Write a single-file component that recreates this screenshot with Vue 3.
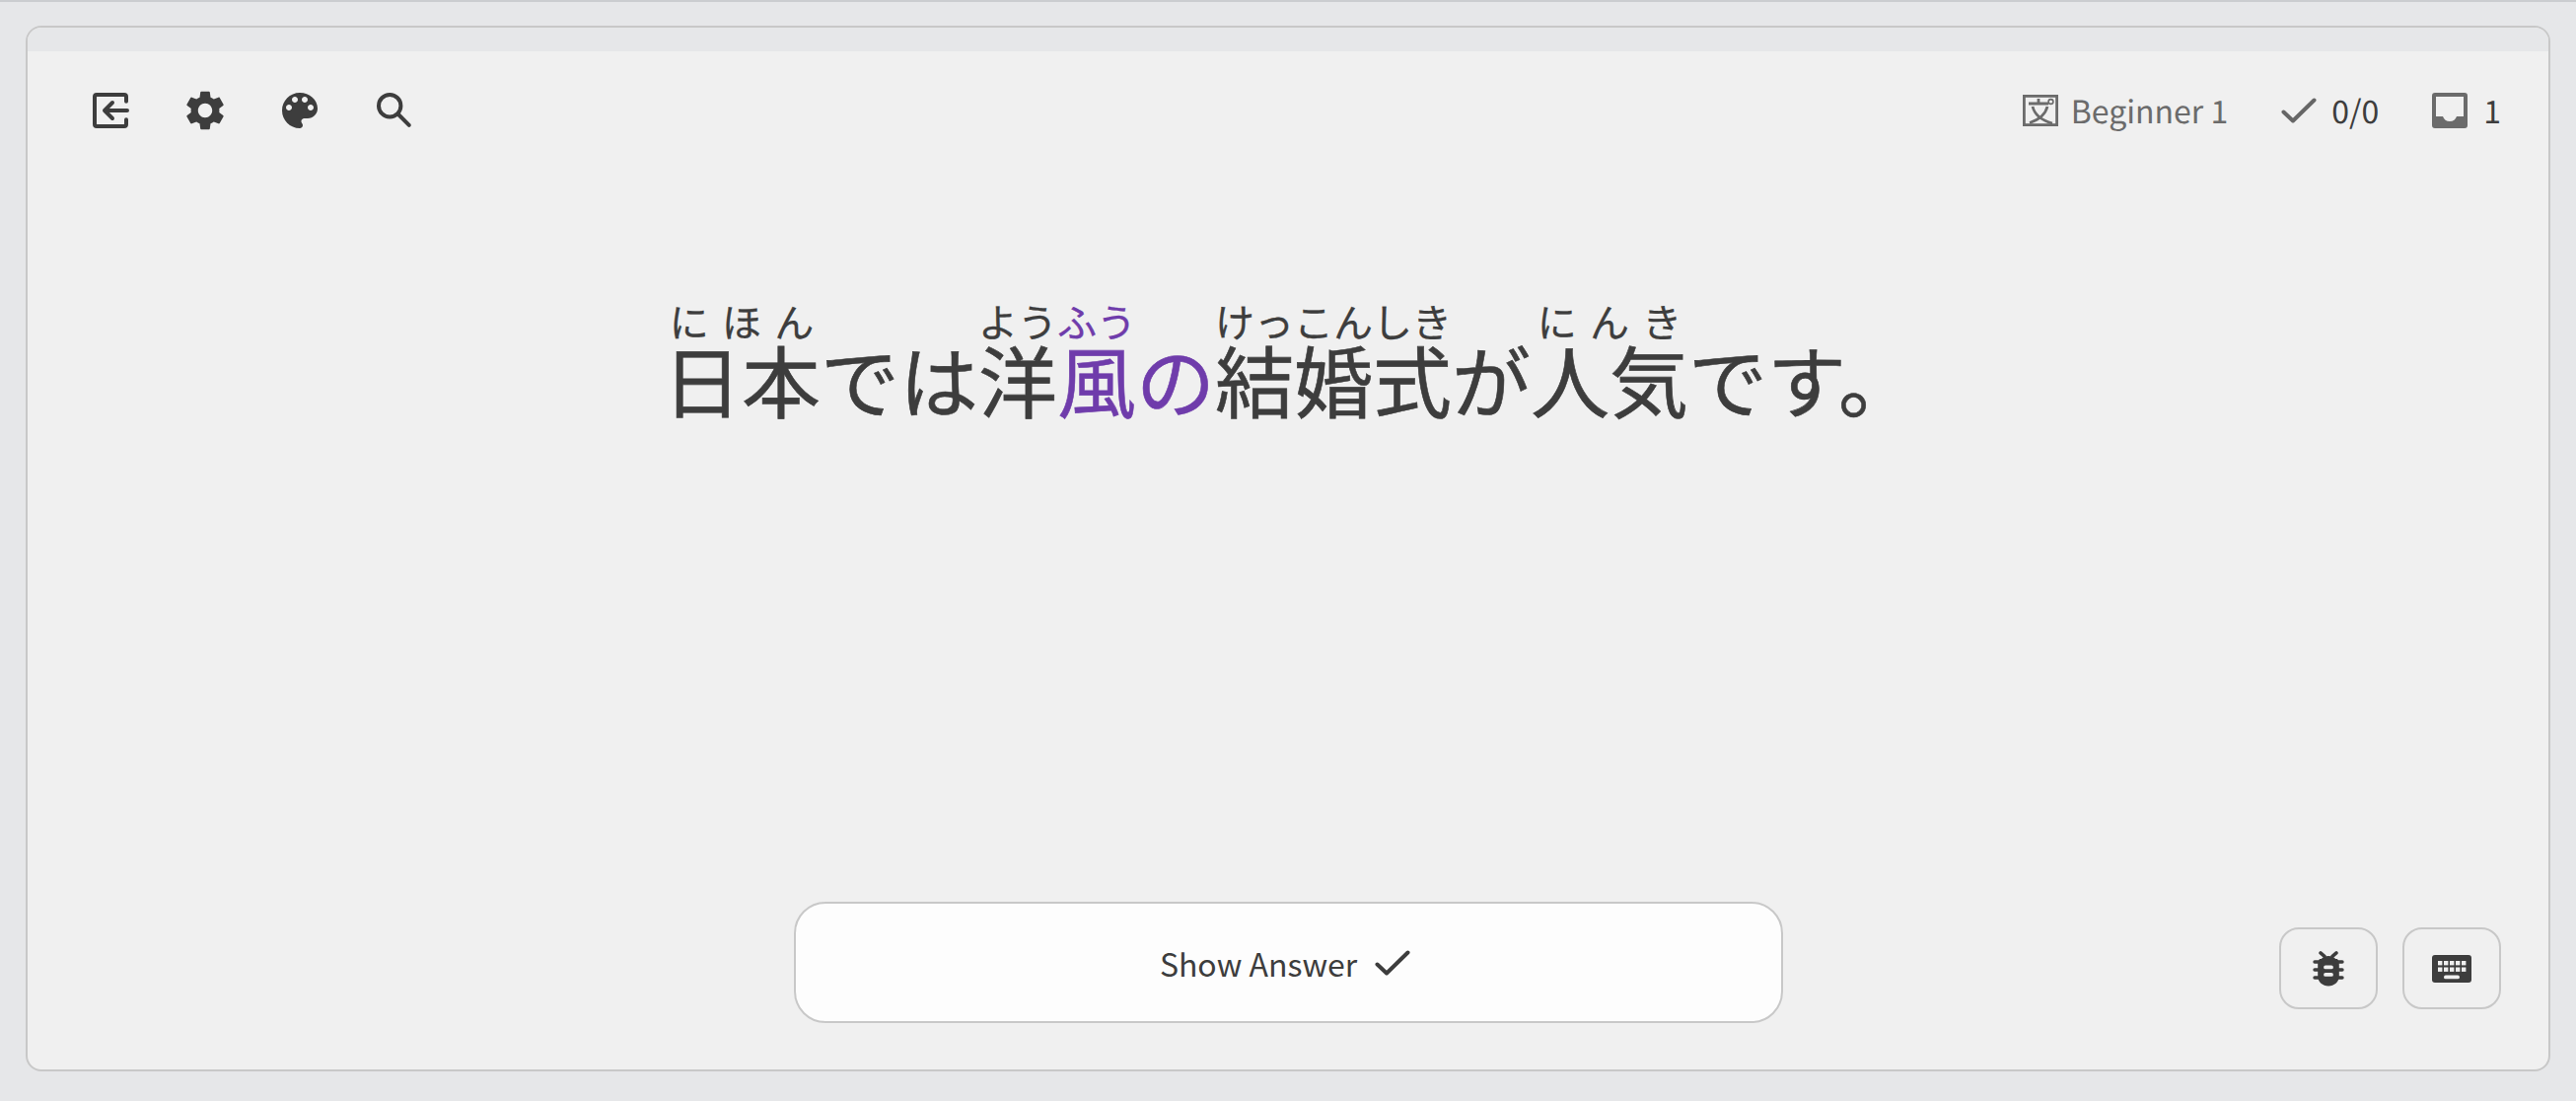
<script setup>
const leftIcons = ['exit', 'settings', 'palette', 'search']
const settingsPath = 'M19.14,12.94c0.04-0.3,0.06-0.61,0.06-0.94c0-0.32-0.02-0.64-0.07-0.94l2.03-1.58c0.18-0.14,0.23-0.41,0.12-0.61l-1.92-3.32c-0.12-0.22-0.37-0.29-0.59-0.22l-2.39,0.96c-0.5-0.38-1.03-0.7-1.62-0.94L14.4,2.81c-0.04-0.24-0.24-0.41-0.48-0.41h-3.84c-0.24,0-0.43,0.17-0.47,0.41L9.25,5.35C8.66,5.59,8.12,5.92,7.63,6.29L5.24,5.33c-0.22-0.08-0.47,0-0.59,0.22L2.74,8.87C2.62,9.08,2.66,9.34,2.86,9.48l2.03,1.58C4.84,11.36,4.8,11.69,4.8,12s0.02,0.64,0.07,0.94l-2.03,1.58c-0.18,0.14-0.23,0.41-0.12,0.61l1.92,3.32c0.12,0.22,0.37,0.29,0.59,0.22l2.39-0.96c0.5,0.38,1.03,0.7,1.62,0.94l0.36,2.54c0.05,0.24,0.24,0.41,0.48,0.41h3.84c0.24,0,0.44-0.17,0.47-0.41l0.36-2.54c0.59-0.24,1.13-0.56,1.62-0.94l2.39,0.96c0.22,0.08,0.47,0,0.59-0.22l1.92-3.32c0.12-0.22,0.07-0.47-0.12-0.61L19.14,12.94z M12,15.6c-1.98,0-3.6-1.62-3.6-3.6s1.62-3.6,3.6-3.6s3.6,1.62,3.6,3.6S13.98,15.6,12,15.6z'
const palettePath = 'M12 3c-4.97 0-9 4.03-9 9s4.03 9 9 9c.83 0 1.5-.67 1.5-1.5 0-.39-.15-.74-.39-1.01-.23-.26-.38-.61-.38-.99 0-.83.67-1.5 1.5-1.5H16c2.76 0 5-2.24 5-5 0-4.42-4.03-8-9-8zm-5.5 9c-.83 0-1.5-.67-1.5-1.5S5.67 9 6.5 9 8 9.67 8 10.5 7.33 12 6.5 12zm3-4C8.67 8 8 7.33 8 6.5S8.67 5 9.5 5s1.5.67 1.5 1.5S10.33 8 9.5 8zm5 0c-.83 0-1.5-.67-1.5-1.5S13.67 5 14.5 5s1.5.67 1.5 1.5S15.33 8 14.5 8zm3 4c-.83 0-1.5-.67-1.5-1.5S16.67 9 17.5 9s1.5.67 1.5 1.5-.67 1.5-1.5 1.5z'
const keys = [
  [6, 6], [12, 6], [18, 6], [24, 6], [30, 6],
  [6, 12.500], [12, 12.500], [18, 12.500], [24, 12.500], [30, 12.500],
]
</script>

<template>
  <div class="page">
    <main class="card">
      <div class="band"></div>
      <header class="topbar">
        <nav class="tools">
          <button v-for="icon in leftIcons" :key="icon" class="tool">
            <svg v-if="icon === 'exit'" viewBox="0 0 24 24" fill="none" stroke="currentColor" stroke-width="2" stroke-linecap="round" stroke-linejoin="round">
              <path d="M20 7.400V5a1 1 0 0 0-1-1H5a1 1 0 0 0-1 1v14a1 1 0 0 0 1 1h14a1 1 0 0 0 1-1v-2.400" />
              <path d="M20.500 12H9M13 8l-4 4 4 4" />
            </svg>
            <svg v-else-if="icon === 'settings'" viewBox="0 0 24 24" fill="currentColor"><path :d="settingsPath" /></svg>
            <svg v-else-if="icon === 'palette'" viewBox="0 0 24 24" fill="currentColor"><path :d="palettePath" /></svg>
            <svg v-else viewBox="0 0 24 24" fill="none" stroke="currentColor" stroke-width="2" stroke-linecap="round">
              <circle cx="9.600" cy="9.600" r="5.600" />
              <path d="M14 14l5.400 5.400" />
            </svg>
          </button>
        </nav>
        <div class="stats">
          <div class="stat stat--level">
            <svg class="level-icon" viewBox="0 0 36 32" fill="none" stroke="currentColor" stroke-width="2.800">
              <rect x="1.400" y="1.400" width="33.200" height="29.200" />
              <path d="M6 9h20M16 4v5M25 12c-2 8-9 13.500-18 16.500M10 12c2 8 9 14 20 17" />
              <circle cx="28.500" cy="7" r="2.400" stroke-width="1.600" />
            </svg>
            <span>Beginner 1</span>
          </div>
          <div class="stat stat--done">
            <svg class="check-icon" viewBox="0 0 36 26" fill="none" stroke="currentColor" stroke-width="4" stroke-linecap="round" stroke-linejoin="round">
              <path d="M2.500 14.500l9.500 9L33.500 2.500" />
            </svg>
            <span>0/0</span>
          </div>
          <div class="stat stat--inbox">
            <svg class="inbox-icon" viewBox="0 0 36 36">
              <path fill="currentColor" fill-rule="evenodd" d="M3 0h30a3 3 0 0 1 3 3v30a3 3 0 0 1-3 3H3a3 3 0 0 1-3-3V3a3 3 0 0 1 3-3zM4 4v20h7c1 3 3.500 5 7 5s6-2 7-5h7V4z" />
            </svg>
            <span>1</span>
          </div>
        </div>
      </header>

      <section class="question">
        <p class="sentence" lang="ja">
          <ruby>日本<rt>にほん</rt></ruby>では<ruby>洋<rt>よう</rt></ruby><span class="target"><ruby>風<rt>ふう</rt></ruby>の</span><ruby>結婚式<rt>けっこんしき</rt></ruby>が<ruby>人気<rt>にんき</rt></ruby>です。
        </p>
      </section>

      <footer class="actions">
        <div></div>
        <button class="answer">
          <span>Show Answer</span>
          <svg class="answer-check" viewBox="0 0 36 26" fill="none" stroke="currentColor" stroke-width="4" stroke-linecap="round" stroke-linejoin="round">
            <path d="M2.500 14.500l9.500 9L33.500 2.500" />
          </svg>
        </button>
        <div class="small-buttons">
          <button class="small">
            <svg class="bug" viewBox="0 0 32 36" fill="currentColor">
              <path fill-rule="evenodd" d="M16 5c3 0 5.500 1 7.300 3H8.700C10.500 6 13 5 16 5zM7 8h18c1.500 2 1.800 4 1.800 6v12c0 5-5 9.500-10.800 9.500S5.200 31 5.200 26V14c0-2 .3-4 1.800-6zm6 6.500a1.900 1.900 0 0 0 0 3.800h6a1.900 1.900 0 0 0 0-3.800zm0 7.500a1.900 1.900 0 0 0 0 3.800h6a1.900 1.900 0 0 0 0-3.800z" />
              <path fill="none" stroke="currentColor" stroke-width="3.400" stroke-linecap="round" d="M8 1.900l4 3.500M24 1.900l-4 3.500M2 11h5M25 11h5M2 19h5M25 19h5M2 27h5M25 27h5" />
            </svg>
          </button>
          <button class="small">
            <svg class="keyboard" viewBox="0 0 40 28">
              <rect width="40" height="28" rx="3" fill="currentColor" />
              <rect v-for="(key, i) in keys" :key="i" :x="key[0]" :y="key[1]" width="4.400" height="4.400" fill="#f0f0f0" />
              <rect x="12" y="20.500" width="16" height="3.800" rx="1.900" fill="#f0f0f0" />
            </svg>
          </button>
        </div>
      </footer>
    </main>
  </div>
</template>

<style scoped>
.page {
  box-sizing: border-box;
  height: 1116px;
  padding: 24px 26px 30px;
  border-top: 2px solid #cbcdd0;
  background: #e6e7e9;
  font-family: 'Noto Sans CJK JP', 'Noto Sans', sans-serif;
  color: #3d3d3d;
  text-rendering: geometricPrecision;
}

.card {
  box-sizing: border-box;
  height: 100%;
  display: flex;
  flex-direction: column;
  border: 2px solid #c8c8c8;
  border-radius: 16px;
  background: #f0f0f0;
  overflow: hidden;
}

.band {
  flex: none;
  height: 24px;
  background: #e6e7e9;
}

.topbar {
  flex: none;
  display: flex;
  align-items: center;
  justify-content: space-between;
  padding: 36px 48px 0 60px;
}

.tools {
  display: flex;
  gap: 48px;
}

.tool {
  width: 48px;
  height: 48px;
  padding: 0;
  border: 0;
  background: none;
  color: #3d3d3d;
}

.tool svg {
  display: block;
  width: 48px;
  height: 48px;
}

.stats {
  display: flex;
  align-items: center;
  gap: 54px;
  font-size: 32px;
  line-height: 48px;
}

.stat {
  display: flex;
  align-items: center;
}

.stat--level {
  gap: 13px;
  color: #6b6b6b;
}

.stat--done {
  gap: 15px;
}

.stat--inbox {
  gap: 16px;
}

.level-icon {
  width: 36px;
  height: 32px;
}

.check-icon {
  width: 36px;
  height: 26px;
  color: #666;
}

.inbox-icon {
  width: 36px;
  height: 36px;
  color: #6b6b6b;
}

.question {
  flex: 1;
  display: flex;
  justify-content: center;
  padding: 170px 0 0 4px;
}

.sentence {
  margin: 0;
  font-size: 80px;
  line-height: 120px;
  white-space: nowrap;
  -webkit-text-stroke: 0.6px currentColor;
}

.sentence rt {
  font-size: 40px;
  line-height: 1;
  -webkit-text-stroke: 0.3px currentColor;
}

.target {
  color: #6f3cab;
}

.actions {
  flex: none;
  display: grid;
  grid-template-columns: 1fr 1003px 1fr;
  align-items: center;
  padding: 0 48px 47px;
}

.answer {
  display: flex;
  align-items: center;
  justify-content: center;
  gap: 18px;
  height: 123px;
  padding: 0 6px 0 0;
  border: 2px solid #c8c8c8;
  border-radius: 32px;
  background: #fdfdfd;
  color: #3d3d3d;
  font-family: inherit;
  font-size: 32px;
}

.answer-check {
  width: 36px;
  height: 26px;
}

.small-buttons {
  display: flex;
  justify-content: flex-end;
  gap: 25px;
  margin-top: 12px;
}

.small {
  display: flex;
  align-items: center;
  justify-content: center;
  box-sizing: border-box;
  width: 100px;
  height: 83px;
  padding: 0;
  border: 2px solid #c8c8c8;
  border-radius: 20px;
  background: #f0f0f0;
  color: #3d3d3d;
}

.bug {
  width: 32px;
  height: 36px;
}

.keyboard {
  width: 40px;
  height: 28px;
}
</style>
